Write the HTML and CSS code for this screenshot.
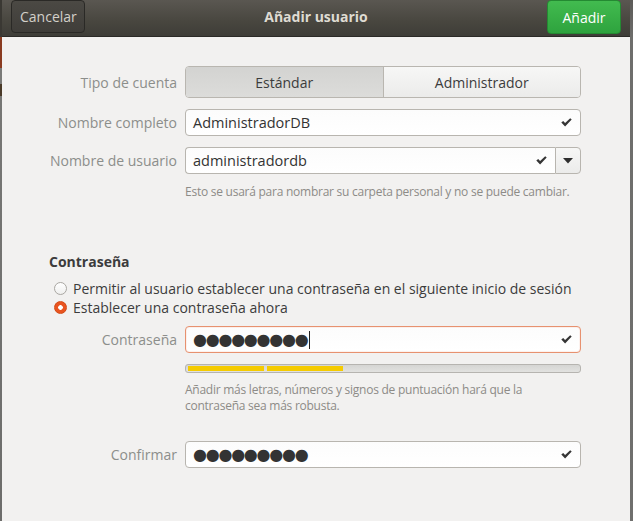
FILE: index.html
```html
<!DOCTYPE html>
<html lang="es">
<head>
<meta charset="utf-8">
<title>Añadir usuario</title>
<link rel="stylesheet" href="styles.css">
</head>
<body>
<div class="screen">
  <div class="edge-left"></div>
  <div class="dialog">
    <header class="headerbar">
      <button class="hb-btn btn-cancel">Cancelar</button>
      <div class="title">Añadir usuario</div>
      <button class="hb-btn btn-add">Añadir</button>
    </header>
    <main class="content">
      <div class="form">
        <label class="lbl">Tipo de cuenta</label>
        <div class="seg">
          <button class="seg-btn active">Estándar</button>
          <button class="seg-btn">Administrador</button>
        </div>

        <label class="lbl">Nombre completo</label>
        <div class="entry">
          <span class="entry-text">AdministradorDB</span>
          <svg class="check" viewBox="0 0 11 9" width="11" height="9"><path d="M0.3 4.6 L2.2 2.9 L4.1 4.9 L9.2 0.2 L10.7 1.6 L4.1 8.6 Z" fill="#353535"/></svg>
        </div>

        <label class="lbl">Nombre de usuario</label>
        <div class="combo">
          <div class="entry combo-entry">
            <span class="entry-text">administradordb</span>
            <svg class="check" viewBox="0 0 11 9" width="11" height="9"><path d="M0.3 4.6 L2.2 2.9 L4.1 4.9 L9.2 0.2 L10.7 1.6 L4.1 8.6 Z" fill="#353535"/></svg>
          </div>
          <button class="combo-btn"><svg viewBox="0 0 10 6" width="10" height="6"><path d="M0 0 H10 L5 5.5 Z" fill="#2e2e2e"/></svg></button>
        </div>

        <span></span>
        <p class="hint hint-user">Esto se usará para nombrar su carpeta personal y no se puede cambiar.</p>
      </div>

      <section class="pw">
        <h2 class="pw-title">Contraseña</h2>
        <div class="radio-row">
          <span class="radio"></span>
          <span>Permitir al usuario establecer una contraseña en el siguiente inicio de sesión</span>
        </div>
        <div class="radio-row">
          <span class="radio checked"></span>
          <span>Establecer una contraseña ahora</span>
        </div>
      </section>

      <div class="form pw-form">
        <label class="lbl">Contraseña</label>
        <div class="entry focus">
          <span class="dots">●●●●●●●●●</span><span class="cursor"></span>
          <svg class="check" viewBox="0 0 11 9" width="11" height="9"><path d="M0.3 4.6 L2.2 2.9 L4.1 4.9 L9.2 0.2 L10.7 1.6 L4.1 8.6 Z" fill="#353535"/></svg>
        </div>

        <span></span>
        <div class="level">
          <span class="lv-fill"></span><span class="lv-fill"></span>
        </div>

        <span></span>
        <p class="hint hint-pw">Añadir más letras, números y signos de puntuación hará que la<br>contraseña sea más robusta.</p>

        <label class="lbl lbl-confirm">Confirmar</label>
        <div class="entry entry-confirm">
          <span class="dots">●●●●●●●●●</span>
          <svg class="check" viewBox="0 0 11 9" width="11" height="9"><path d="M0.3 4.6 L2.2 2.9 L4.1 4.9 L9.2 0.2 L10.7 1.6 L4.1 8.6 Z" fill="#353535"/></svg>
        </div>
      </div>
    </main>
  </div>
  <div class="edge-right"></div>
</div>
</body>
</html>
```

FILE: styles.css
```css
* { box-sizing: border-box; }
html, body { margin: 0; padding: 0; }
body {
  width: 633px;
  height: 521px;
  overflow: hidden;
  font-family: "Open Sans", "Noto Sans", sans-serif;
  font-size: 14px;
  color: #3c3c3c;
}
.screen {
  display: flex;
  width: 633px;
  height: 521px;
}
.edge-left {
  width: 2px;
  flex: none;
  background: linear-gradient(to bottom, #3a3833 0, #3a3833 37px, #8a3b20 37px, #8a3b20 68px, #7a7a78 68px, #7a7a78 84px, #4a3a28 84px, #4a3a28 96px, #777775 96px, #6d6d6b 100%);
}
.edge-right {
  width: 3px;
  flex: none;
  background: linear-gradient(to bottom, #5c5b58 0, #6e6e6c 40px, #6f6f6d 100%);
}
.dialog {
  flex: 1;
  display: flex;
  flex-direction: column;
  background: #f2f1f0;
}
.headerbar {
  height: 37px;
  flex: none;
  display: flex;
  align-items: flex-start;
  justify-content: space-between;
  padding: 0 9px;
  background: linear-gradient(to bottom, #5a5751, #48463f 60%, #3e3d38);
  border-bottom: 1px solid #2b2a27;
}
.hb-btn {
  font-family: inherit;
  font-size: 14px;
  height: 33px;
  border-radius: 4px;
  padding: 0 8px;
  margin: 0;
}
.btn-cancel {
  width: 74px;
  color: #d3d0c9;
  background: linear-gradient(to bottom, #4b4944, #3f3d39);
  border: 1px solid #2a2926;
}
.btn-add {
  width: 74px;
  height: 34px;
  color: #ffffff;
  background: linear-gradient(to bottom, #42bb4f, #2ea33e);
  border: 1px solid #248a32;
}
.title {
  color: #dfdbd2;
  font-weight: bold;
  font-size: 14px;
  line-height: 34px;
}
.content {
  flex: 1;
  display: flex;
  flex-direction: column;
}
.form {
  display: grid;
  grid-template-columns: 175px 396px;
  column-gap: 8px;
  row-gap: 11px;
  margin-top: 29px;
  align-items: center;
}
.lbl {
  text-align: right;
  color: #8c8e8b;
  font-size: 14px;
  white-space: nowrap;
}
.seg {
  display: flex;
  height: 32px;
  border: 1px solid #b9b6b0;
  border-radius: 4px;
  overflow: hidden;
}
.seg-btn {
  flex: 1;
  font-family: inherit;
  font-size: 14px;
  color: #3c3c3c;
  border: 0;
  margin: 0;
  background: linear-gradient(to bottom, #f7f7f6, #ebebea);
}
.seg-btn.active {
  background: linear-gradient(to bottom, #d3d3d1, #dcdcda);
  border-right: 1px solid #b9b6b0;
}
.entry {
  display: flex;
  align-items: center;
  height: 27px;
  padding: 0 8px 0 7px;
  background: linear-gradient(to bottom, #fcfcfc, #ffffff);
  border: 1px solid #b8b5af;
  border-radius: 4px;
}
.entry-text {
  flex: 1;
  font-size: 14.5px;
  color: #333;
}
.check { flex: none; margin-left: auto; }
.combo {
  display: flex;
  height: 27px;
}
.combo-entry {
  flex: 1;
  border-radius: 4px 0 0 4px;
  border-right: 0;
}
.combo-btn {
  width: 26px;
  height: 27px;
  margin: 0;
  padding: 0;
  display: flex;
  align-items: center;
  justify-content: center;
  background: linear-gradient(to bottom, #f7f7f6, #ebebea);
  border: 1px solid #b8b5af;
  border-radius: 0 4px 4px 0;
}
.hint {
  margin: -1px 0 0;
  font-size: 12px;
  line-height: 15px;
  color: #8d8b87;
  letter-spacing: -0.25px;
  white-space: nowrap;
}
.pw {
  margin: 54px 0 0 47px;
}
.pw-title {
  margin: 0;
  font-size: 14px;
  line-height: 18px;
  font-weight: bold;
  color: #3c3c3c;
}
.radio-row {
  display: flex;
  align-items: center;
  gap: 6px;
  margin-left: 5px;
  height: 19px;
  font-size: 14px;
  color: #3c3c3c;
}
.radio-row:first-of-type { margin-top: 8px; }
.radio {
  width: 13px;
  height: 13px;
  border-radius: 50%;
  border: 1px solid #a9a7a2;
  background: linear-gradient(to bottom, #ffffff, #efefee);
  flex: none;
}
.radio.checked {
  border-color: #d24a16;
  background: radial-gradient(circle, #ffffff 0, #ffffff 2px, #e95420 2.6px);
}
.pw-form {
  margin-top: 9px;
}
.entry.focus {
  border-color: #e7916f;
  box-shadow: inset 0 0 0 1px rgba(233, 84, 32, 0.08);
}
.dots {
  font-family: "DejaVu Sans", sans-serif;
  font-size: 16px;
  letter-spacing: -1.25px;
  color: #333;
  line-height: 1;
}
.cursor {
  width: 1px;
  height: 18px;
  background: #222;
  margin-left: 2px;
}
.level {
  display: flex;
  gap: 3px;
  height: 9px;
  padding: 1px 2px;
  border: 1px solid #b6b4b0;
  border-radius: 3px;
  background: linear-gradient(to bottom, #d5d5d3, #e2e2e0);
}
.lv-fill {
  width: 76px;
  background: #f5cb00;
}
.hint-pw {
  margin-top: -2px;
  line-height: 16px;
}
.lbl-confirm, .entry-confirm {
  margin-top: 16px;
}
```
